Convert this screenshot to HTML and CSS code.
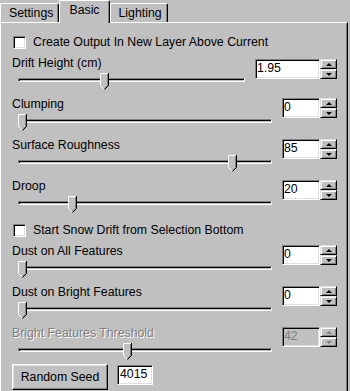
FILE: index.html
```html
<!DOCTYPE html>
<html>
<head>
<meta charset="utf-8">
<title>Snow Drift - Basic</title>
<link rel="stylesheet" href="styles.css">
</head>
<body>

<div class="tabs">
  <div class="tab">Settings</div>
  <div class="tab active">Basic</div>
  <div class="tab">Lighting</div>
</div>

<div class="panel">

  <div class="check"><span class="checkbox"></span>Create Output In New Layer Above Current</div>

  <div class="field">
    <div class="field-main">
      <div class="label">Drift Height (cm)</div>
      <div class="slider">
        <div class="track"></div>
        <svg class="thumb" style="left: 82px" width="9" height="17" viewBox="0 0 9 17"><path d="M0 0H9V12.5L4.5 17L0 12.5Z" fill="#c0c0c0"/><path d="M0.5 12.5V0.5H8M0.5 12.5L4 16" stroke="#fff" fill="none"/><path d="M7.5 1V12.3L4.3 15.5" stroke="#808080" fill="none"/><path d="M8.5 0V12.5L4.5 16.5" stroke="#000" fill="none"/></svg>
      </div>
    </div>
    <div class="spin wide">
      <div class="edit">1.95</div>
      <div class="arrows"><span class="up"></span><span class="down"></span></div>
    </div>
  </div>

  <div class="field">
    <div class="field-main">
      <div class="label">Clumping</div>
      <div class="slider">
        <div class="track"></div>
        <svg class="thumb" style="left: 0px" width="9" height="17" viewBox="0 0 9 17"><path d="M0 0H9V12.5L4.5 17L0 12.5Z" fill="#c0c0c0"/><path d="M0.5 12.5V0.5H8M0.5 12.5L4 16" stroke="#fff" fill="none"/><path d="M7.5 1V12.3L4.3 15.5" stroke="#808080" fill="none"/><path d="M8.5 0V12.5L4.5 16.5" stroke="#000" fill="none"/></svg>
      </div>
    </div>
    <div class="spin">
      <div class="edit">0</div>
      <div class="arrows"><span class="up"></span><span class="down"></span></div>
    </div>
  </div>

  <div class="field">
    <div class="field-main">
      <div class="label">Surface Roughness</div>
      <div class="slider">
        <div class="track"></div>
        <svg class="thumb" style="left: 210px" width="9" height="17" viewBox="0 0 9 17"><path d="M0 0H9V12.5L4.5 17L0 12.5Z" fill="#c0c0c0"/><path d="M0.5 12.5V0.5H8M0.5 12.5L4 16" stroke="#fff" fill="none"/><path d="M7.5 1V12.3L4.3 15.5" stroke="#808080" fill="none"/><path d="M8.5 0V12.5L4.5 16.5" stroke="#000" fill="none"/></svg>
      </div>
    </div>
    <div class="spin">
      <div class="edit">85</div>
      <div class="arrows"><span class="up"></span><span class="down"></span></div>
    </div>
  </div>

  <div class="field">
    <div class="field-main">
      <div class="label">Droop</div>
      <div class="slider">
        <div class="track"></div>
        <svg class="thumb" style="left: 50px" width="9" height="17" viewBox="0 0 9 17"><path d="M0 0H9V12.5L4.5 17L0 12.5Z" fill="#c0c0c0"/><path d="M0.5 12.5V0.5H8M0.5 12.5L4 16" stroke="#fff" fill="none"/><path d="M7.5 1V12.3L4.3 15.5" stroke="#808080" fill="none"/><path d="M8.5 0V12.5L4.5 16.5" stroke="#000" fill="none"/></svg>
      </div>
    </div>
    <div class="spin">
      <div class="edit">20</div>
      <div class="arrows"><span class="up"></span><span class="down"></span></div>
    </div>
  </div>

  <div class="check"><span class="checkbox"></span>Start Snow Drift from Selection Bottom</div>

  <div class="field">
    <div class="field-main">
      <div class="label">Dust on All Features</div>
      <div class="slider">
        <div class="track"></div>
        <svg class="thumb" style="left: 0px" width="9" height="17" viewBox="0 0 9 17"><path d="M0 0H9V12.5L4.5 17L0 12.5Z" fill="#c0c0c0"/><path d="M0.5 12.5V0.5H8M0.5 12.5L4 16" stroke="#fff" fill="none"/><path d="M7.5 1V12.3L4.3 15.5" stroke="#808080" fill="none"/><path d="M8.5 0V12.5L4.5 16.5" stroke="#000" fill="none"/></svg>
      </div>
    </div>
    <div class="spin">
      <div class="edit">0</div>
      <div class="arrows"><span class="up"></span><span class="down"></span></div>
    </div>
  </div>

  <div class="field">
    <div class="field-main">
      <div class="label">Dust on Bright Features</div>
      <div class="slider">
        <div class="track"></div>
        <svg class="thumb" style="left: 0px" width="9" height="17" viewBox="0 0 9 17"><path d="M0 0H9V12.5L4.5 17L0 12.5Z" fill="#c0c0c0"/><path d="M0.5 12.5V0.5H8M0.5 12.5L4 16" stroke="#fff" fill="none"/><path d="M7.5 1V12.3L4.3 15.5" stroke="#808080" fill="none"/><path d="M8.5 0V12.5L4.5 16.5" stroke="#000" fill="none"/></svg>
      </div>
    </div>
    <div class="spin">
      <div class="edit">0</div>
      <div class="arrows"><span class="up"></span><span class="down"></span></div>
    </div>
  </div>

  <div class="field disabled last">
    <div class="field-main">
      <div class="label">Bright Features Threshold</div>
      <div class="slider">
        <div class="track"></div>
        <svg class="thumb" style="left: 105px" width="9" height="17" viewBox="0 0 9 17"><path d="M0 0H9V12.5L4.5 17L0 12.5Z" fill="#c0c0c0"/><path d="M0.5 12.5V0.5H8M0.5 12.5L4 16" stroke="#fff" fill="none"/><path d="M7.5 1V12.3L4.3 15.5" stroke="#808080" fill="none"/><path d="M8.5 0V12.5L4.5 16.5" stroke="#000" fill="none"/></svg>
      </div>
    </div>
    <div class="spin">
      <div class="edit">42</div>
      <div class="arrows"><span class="up"></span><span class="down"></span></div>
    </div>
  </div>

  <div class="footer">
    <div class="button">Random Seed</div>
    <div class="edit seed">4015</div>
  </div>

</div>

</body>
</html>
```

FILE: styles.css
```css
html, body {
  overflow: hidden;
}

body {
  margin: 0;
  background-color: #c0c0c0;
  font-family: "Liberation Sans", Arial, sans-serif;
  font-size: 12.3px;
  line-height: 14px;
  color: #000;
}

/* tab strip */

.tabs {
  display: flex;
  align-items: flex-end;
  height: 22px;
  position: relative;
  z-index: 1;
}

.tab {
  box-sizing: border-box;
  height: 19px;
  padding: 2px 5px 0 8px;
  border-top: 1px solid #fff;
  border-left: 1px solid #fff;
  border-right: 1px solid #000;
  border-radius: 2px 2px 0 0;
  box-shadow: inset -1px 0 #808080;
}

.tab.active {
  height: 23px;
  margin-bottom: -1px;
  padding: 2px 9px 0 9px;
  background-color: #c0c0c0;
}

/* page body */

.panel {
  box-sizing: border-box;
  width: 348px;
  height: 372px;
  display: flex;
  flex-direction: column;
  padding: 9px 10px 0 11px;
  border: 1px solid;
  border-color: #fff #000 #000 #fff;
  box-shadow: inset -1px -1px #808080;
}

.check {
  display: flex;
  align-items: center;
  height: 14px;
  margin: 3px 0 7px;
  white-space: nowrap;
}

.checkbox {
  box-sizing: border-box;
  width: 13px;
  height: 13px;
  margin: 0 7px 0 1px;
  background-color: #fff;
  border: 1px solid;
  border-color: #808080 #fff #fff #808080;
  box-shadow: inset 1px 1px #000, inset -1px -1px #dfdfdf;
}

.field {
  display: flex;
  height: 38px;
  margin-bottom: 3px;
}

.field.last {
  margin-bottom: 0;
}

.field-main {
  flex: 1;
  min-width: 0;
}

.label {
  height: 14px;
  white-space: nowrap;
}

.slider {
  position: relative;
  height: 16px;
  padding-top: 8px;
  margin: 0 10px 0 6px;
}

.track {
  box-sizing: border-box;
  height: 4px;
  border: 1px solid;
  border-color: #808080 #fff #fff #808080;
  box-shadow: inset 1px 1px #000;
}

.thumb {
  position: absolute;
  top: 3px;
  display: block;
}

/* edit boxes and up/down buttons */

.spin {
  display: flex;
  align-self: flex-start;
  margin-top: 1px;
}

.spin.wide {
  margin-top: 3px;
}

.edit {
  box-sizing: border-box;
  width: 38px;
  height: 20px;
  padding: 0 1px;
  line-height: 16px;
  background-color: #fff;
  border: 1px solid;
  border-color: #808080 #fff #fff #808080;
  box-shadow: inset 1px 1px #000, inset -1px -1px #dfdfdf;
}

.spin.wide .edit {
  width: 65px;
}

.arrows {
  display: flex;
  flex-direction: column;
  width: 17px;
}

.arrows span {
  box-sizing: border-box;
  height: 10px;
  display: flex;
  align-items: center;
  justify-content: center;
  border: 1px solid;
  border-color: #dfdfdf #000 #000 #dfdfdf;
  box-shadow: inset 1px 1px #fff, inset -1px -1px #808080;
}

.arrows span::after {
  content: "";
  width: 0;
  height: 0;
  border-left: 3px solid transparent;
  border-right: 3px solid transparent;
}

.arrows .up::after {
  border-bottom: 3px solid #000;
}

.arrows .down::after {
  border-top: 3px solid #000;
}

.disabled .label {
  color: #808080;
  text-shadow: 1px 1px #fff;
}

.disabled .edit {
  background-color: #c0c0c0;
  color: #808080;
}

.disabled .arrows .up::after {
  border-bottom-color: #808080;
}

.disabled .arrows .down::after {
  border-top-color: #808080;
}

/* bottom row */

.footer {
  display: flex;
  align-items: flex-start;
}

.button {
  box-sizing: border-box;
  width: 96px;
  height: 26px;
  line-height: 24px;
  text-align: center;
  border: 1px solid;
  border-color: #fff #000 #000 #fff;
  box-shadow: inset -1px -1px #808080, inset 1px 1px #dfdfdf;
}

.edit.seed {
  width: 36px;
  margin: 1px 0 0 9px;
  padding-left: 2px;
}
```
